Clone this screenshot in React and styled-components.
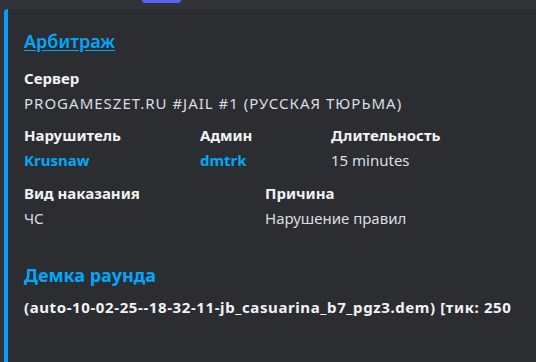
import React from "react";
import styled, { createGlobalStyle } from "styled-components";

const GlobalStyle = createGlobalStyle`
  html, body {
    margin: 0;
    padding: 0;
    background: #313338;
    font-family: "Noto Sans", "Open Sans", sans-serif;
  }
`;

const Page = styled.div`
  width: 536px;
  height: 362px;
  overflow: hidden;
  display: flex;
  flex-direction: column;
`;

const TopStrip = styled.div`
  height: 9px;
  flex-shrink: 0;
  padding-left: 142px;
`;

const Indicator = styled.div`
  width: 39px;
  height: 3px;
  background: #5865f2;
  border-radius: 0 0 3px 3px;
`;

const Embed = styled.div`
  flex: 1;
  margin-left: 4px;
  background: #2b2d31;
  border-left: 4px solid #0a9cf6;
  border-top-left-radius: 4px;
  padding: 20px 16px 0 16px;
  display: flex;
  flex-direction: column;
`;

const Title = styled.a`
  align-self: flex-start;
  font-size: 18px;
  line-height: 24px;
  font-weight: 600;
  color: #00a8fc;
  text-decoration: underline;
  text-underline-offset: 2px;
  margin-bottom: 15px;
`;

const Row = styled.div`
  display: grid;
  grid-template-columns: ${(p) => p.$cols};
  margin-bottom: ${(p) => p.$gap || 0}px;
`;

const Field = styled.div`
  display: flex;
  flex-direction: column;
  gap: 5px;
  min-width: 0;
`;

const Name = styled.div`
  font-size: 15px;
  line-height: 20px;
  font-weight: 700;
  color: #f2f3f5;
  white-space: nowrap;
`;

const Value = styled.div`
  font-size: 15px;
  line-height: 20px;
  font-weight: ${(p) => (p.$bold ? 700 : 400)};
  color: ${(p) => (p.$link ? "#00a8fc" : "#dbdee1")};
  letter-spacing: ${(p) => p.$spread || 0}px;
  white-space: nowrap;
`;

const Heading = styled.div`
  font-size: 18px;
  line-height: 24px;
  font-weight: 700;
  color: #00a8fc;
  margin-bottom: 10px;
  white-space: nowrap;
`;

const Demo = styled.div`
  font-size: 15px;
  line-height: 20px;
  font-weight: 700;
  color: #f2f3f5;
  letter-spacing: 0.6px;
  white-space: nowrap;
`;

export default function App() {
  return (
    <>
      <GlobalStyle />
      <Page>
        <TopStrip>
          <Indicator />
        </TopStrip>
        <Embed>
          <Title>Арбитраж</Title>
          <Row $cols="1fr" $gap={12}>
            <Field>
              <Name>Сервер</Name>
              <Value $spread={1}>PROGAMESZET.RU #JAIL #1 (РУССКАЯ ТЮРЬМА)</Value>
            </Field>
          </Row>
          <Row $cols="176px 131px 1fr" $gap={13}>
            <Field>
              <Name>Нарушитель</Name>
              <Value $bold $link>Krusnaw</Value>
            </Field>
            <Field>
              <Name>Админ</Name>
              <Value $bold $link>dmtrk</Value>
            </Field>
            <Field>
              <Name>Длительность</Name>
              <Value>15 minutes</Value>
            </Field>
          </Row>
          <Row $cols="241px 1fr" $gap={35}>
            <Field>
              <Name>Вид наказания</Name>
              <Value>ЧС</Value>
            </Field>
            <Field>
              <Name>Причина</Name>
              <Value>Нарушение правил</Value>
            </Field>
          </Row>
          <Heading>Демка раунда</Heading>
          <Demo>(auto-10-02-25--18-32-11-jb_casuarina_b7_pgz3.dem) [тик: 250</Demo>
        </Embed>
      </Page>
    </>
  );
}
